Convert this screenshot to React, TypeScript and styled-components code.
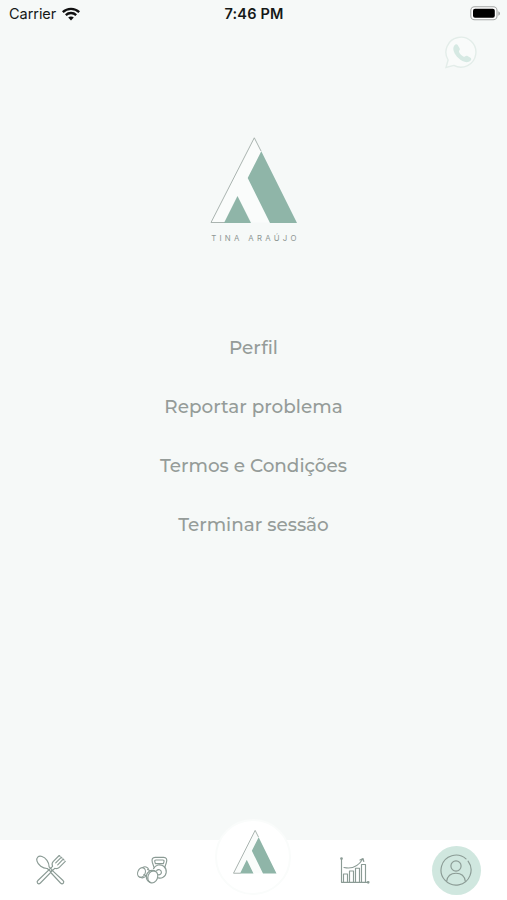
import React from "react";
import styled, { createGlobalStyle } from "styled-components";

const GlobalStyle = createGlobalStyle`
  * { box-sizing: border-box; }
  body { margin: 0; background: #f6f9f8; }
`;

const Screen = styled.div`
  width: 100%;
  height: 100vh;
  display: flex;
  flex-direction: column;
  overflow: hidden;
  background: #f6f9f8;
  font-family: Inter, "Liberation Sans", sans-serif;
`;

const StatusBar = styled.header`
  height: 28px;
  flex: none;
  display: grid;
  grid-template-columns: 1fr auto 1fr;
  align-items: center;
  padding: 0 6px 1px 9px;
  color: #151817;
  font-size: 14.5px;
`;

const Carrier = styled.div`
  display: flex;
  align-items: center;
  gap: 6px;
  letter-spacing: -0.05px;
`;

const Clock = styled.div`
  font-weight: 600;
  font-size: 14.5px;
  letter-spacing: 0.2px;
  margin-right: 2px;
`;

const BatterySlot = styled.div`
  display: flex;
  justify-content: flex-end;
`;

const TopActions = styled.div`
  height: 109px;
  flex: none;
  display: flex;
  justify-content: flex-end;
  align-items: flex-start;
  padding: 8px 29px 0 0;
`;

const IconButton = styled.button`
  display: flex;
  padding: 0;
  border: 0;
  background: none;
`;

const Brand = styled.div`
  height: 181px;
  flex: none;
  display: flex;
  flex-direction: column;
  align-items: center;
`;

const BrandName = styled.div`
  margin-top: 9px;
  padding-left: 4px;
  font-family: Inter, sans-serif;
  font-size: 7.8px;
  line-height: 10px;
  letter-spacing: 3.3px;
  color: #8f9794;
  white-space: nowrap;
`;

const Menu = styled.nav`
  flex: 1;
  display: flex;
  flex-direction: column;
  align-items: center;
`;

const MenuItem = styled.button`
  height: 59px;
  padding: 0;
  border: 0;
  background: none;
  font: 500 18.4px/59px Montserrat, Inter, sans-serif;
  color: #959c99;
  white-space: nowrap;
`;

const TabBar = styled.footer`
  height: 60px;
  flex: none;
  display: grid;
  grid-template-columns: repeat(5, 1fr);
  align-items: center;
  justify-items: center;
  background: #fff;
`;

const Tab = styled.button<{ $active?: boolean }>`
  width: 49px;
  height: 49px;
  display: flex;
  align-items: center;
  justify-content: center;
  border: 0;
  padding: 0;
  border-radius: 50%;
  background: ${(p) => (p.$active ? "#d0e7df" : "transparent")};
`;

const HomeTab = styled.button`
  width: 76px;
  height: 76px;
  margin-top: -27px;
  display: flex;
  justify-content: center;
  align-items: flex-start;
  padding: 9px 0 0 3px;
  border: 2px solid #fafcfb;
  border-radius: 50%;
  background: #fff;
`;

const LineIcon = styled.svg`
  display: block;
  fill: none;
  stroke: #8b9b95;
  stroke-width: 1.15;
  stroke-linecap: round;
  stroke-linejoin: round;
`;

function Logo({ width, height }: { width: number; height: number }) {
  return (
    <svg width={width} height={height} viewBox="0 0 88 87" preserveAspectRatio="none">
      <path d="M44.3 .8 1 85.5H14L27 59 42 85.5H60L38 41 51 14Z" fill="#fafcfb" />
      <path
        d="M51 14 44.3 .8 1 85.5H15"
        fill="none"
        stroke="#a0aba7"
        strokeWidth=".9"
        vectorEffect="non-scaling-stroke"
      />
      <path d="M51.3 14.3 87 86H60L37.7 41ZM27.5 59 41 86H14Z" fill="#8fb5a8" />
    </svg>
  );
}

function Wifi() {
  return (
    <svg width="18" height="14" viewBox="0 0 18 14" fill="none" stroke="#111" strokeWidth="2.3">
      <path d="M.8 5.1C5.3.7 12.7.7 17.2 5.1M3.8 8.1C6.7 5.3 11.3 5.3 14.2 8.1" />
      <path d="m9 13.4-2.8-2.8c1.5-1.5 4.1-1.5 5.6 0Z" fill="#111" stroke="none" />
    </svg>
  );
}

function Battery() {
  return (
    <svg width="31" height="15" viewBox="0 0 31 15">
      <rect x=".8" y=".8" width="26.2" height="13" rx="3.8" fill="#fff" stroke="#a3a6a5" strokeWidth="1.1" />
      <rect x="3" y="2.8" width="21.8" height="9" rx="2" fill="#000" />
      <path d="M28.3 5.2c2.3.8 2.3 3.7 0 4.5Z" fill="#a3a6a5" />
    </svg>
  );
}

function WhatsApp() {
  return (
    <svg width="34" height="34" viewBox="0 0 34 34">
      <path d="M2 31.5 4.1 24A15 15 0 1 1 9.8 29.4Z" fill="#f9fbfa" stroke="#e3ede9" strokeWidth="1.4" />
      <path d="M10.5 9.2c.7-1 2.5-1.4 3.2-.2l2 3.6c.8 1.5-1.2 2.2-.7 3.4 1 2.1 2.6 3.7 4.7 4.7 1.2.5 2-1.6 3.4-.9l3.4 1.9c1.2.7.8 2.1.1 2.9-3 3.2-8.4 1.2-12.2-2.5-3.8-3.6-6.9-9.5-3.9-12.9Z" fill="#d6e9e3" />
    </svg>
  );
}

function Cutlery() {
  return (
    <LineIcon width="32" height="32" viewBox="0 0 32 32">
      <path d="m14.1 12.8 3.1 3.1-1.6 1.7-3.3-3.1C7.7 14.7 2.9 10.8 2 7.2.9 3.6 3.4 1.3 7 2.5c3.7 1.2 7.2 5.7 7.1 10.3ZM18 17.2 28 26.5c2 2-.4 4.5-2.5 2.5L16.2 19" />
      <path d="m24.2 1.5-6.1 6.2c-1.4 1.5-1.1 3.3-.5 4.6L2.9 26.5c-2 2 .5 4.5 2.5 2.5l14.3-14.7c1.6.6 3.3.4 4.6-.9l6-6M26.2 3.3l-5.5 5.6M28.2 5.2l-5.5 5.6M24.2 1.5l.9.9M26.2 3.3l.9.9M28.2 5.2l.9.9" />
    </LineIcon>
  );
}

function Weights() {
  return (
    <LineIcon width="32" height="30" viewBox="0 0 32 30">
      <path d="M18.1 12.6 16.3 7.2c-.8-3 .2-4.9 2.8-4.9h8.6c2.7 0 3.6 2 2.8 4.9l-1.8 5.4M19.4 8.6l-.6-2c-.2-1 .2-1.6 1.2-1.6h6.8c1 0 1.4.6 1.2 1.6l-.6 2Z" />
      <path d="M17.5 13.7c1.8-3.8 6.7-5.2 10.2-2.4 3.8 3 3.3 9.1-1 11.1-1.3.7-2.9.8-4.3.5" />
      <path d="M20.7 15.5c1.6-1.7 4.7-.7 4.7 1.8 0 1.8-1.7 2.8-3.1 2.4" />
      <ellipse cx="16.8" cy="21.9" rx="4.8" ry="6.2" transform="rotate(22 16.8 21.9)" />
      <path d="M18.7 15.9c-4.1-1.8-7.6.9-8.3 4.8-.4 2.8.7 5.3 3.4 6.4M10.4 21l-2.5-1.5M14.2 15.8l-2.6-1.3" />
      <ellipse cx="5.5" cy="17.5" rx="3.7" ry="5" transform="rotate(22 5.5 17.5)" />
      <path d="M6.7 12.5c2-1.4 5.1-.6 5.8 1.7M4.2 22.2c2.1 1.1 4.3.4 5.6-1.2" />
    </LineIcon>
  );
}

function Chart() {
  return (
    <LineIcon width="32" height="29" viewBox="0 0 32 29">
      <path d="M2.5 2.5v23.8h27M4.5 26v-8h4v8M10.5 26V15h4v11M16.5 26V12.2h4V26M22.5 26V8.5h4V26M5 11.5c8.2 1.8 14.7-1.8 18.6-8.2M21 4.1l3-1.6.8 3" />
      <circle cx="2.5" cy="2.6" r=".8" />
      <circle cx="29.2" cy="26.3" r=".8" />
    </LineIcon>
  );
}

function Profile() {
  return (
    <LineIcon width="32" height="32" viewBox="0 0 32 32">
      <path d="M26 4.9A15 15 0 1 0 28.1 7.2" />
      <circle cx="16" cy="12" r="5.1" />
      <path d="M6.7 27.2c.7-5.2 4.3-8 9.3-8s8.6 2.8 9.3 8" />
    </LineIcon>
  );
}

const menuItems = ["Perfil", "Reportar problema", "Termos e Condições", "Terminar sessão"];

export default function App() {
  return (
    <Screen>
      <GlobalStyle />
      <StatusBar>
        <Carrier>Carrier <Wifi /></Carrier>
        <Clock>7:46 PM</Clock>
        <BatterySlot><Battery /></BatterySlot>
      </StatusBar>
      <TopActions>
        <IconButton aria-label="WhatsApp"><WhatsApp /></IconButton>
      </TopActions>
      <Brand>
        <Logo width={88} height={87} />
        <BrandName>TINA ARAÚJO</BrandName>
      </Brand>
      <Menu>
        {menuItems.map((label) => (
          <MenuItem key={label}>{label}</MenuItem>
        ))}
      </Menu>
      <TabBar>
        <Tab aria-label="Nutrição"><Cutlery /></Tab>
        <Tab aria-label="Treino"><Weights /></Tab>
        <HomeTab aria-label="Início"><Logo width={44} height={44} /></HomeTab>
        <Tab aria-label="Progresso"><Chart /></Tab>
        <Tab aria-label="Perfil" $active><Profile /></Tab>
      </TabBar>
    </Screen>
  );
}
